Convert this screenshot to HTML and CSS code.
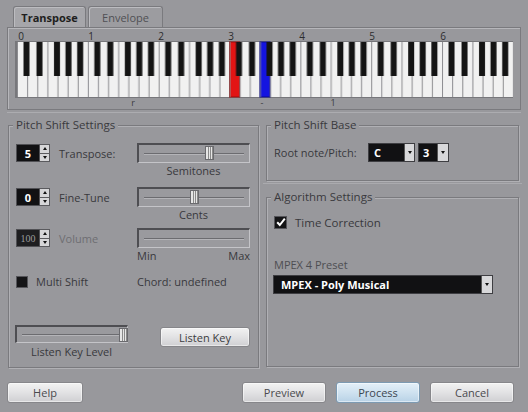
FILE: index.html
```html
<!DOCTYPE html>
<html>
<head>
<meta charset="utf-8">
<link rel="stylesheet" href="styles.css">
</head>
<body>
<div class="dialog">
  <div class="tabs">
    <div class="tab active">Transpose</div>
    <div class="tab inactive">Envelope</div>
  </div>
  <div class="kbpane">
    <svg class="keyboard" width="498" height="80" viewBox="0 0 498 80">
      <defs>
        <pattern id="octave" x="2" y="0" width="70.84" height="80" patternUnits="userSpaceOnUse">
          <rect x="0" y="13" width="1" height="55" fill="#8c8c90"/>
          <rect x="10.12" y="13" width="1" height="55" fill="#8c8c90"/>
          <rect x="20.24" y="13" width="1" height="55" fill="#8c8c90"/>
          <rect x="30.36" y="13" width="1" height="55" fill="#8c8c90"/>
          <rect x="40.48" y="13" width="1" height="55" fill="#8c8c90"/>
          <rect x="50.6" y="13" width="1" height="55" fill="#8c8c90"/>
          <rect x="60.72" y="13" width="1" height="55" fill="#8c8c90"/>
          <rect x="6.5" y="13" width="6" height="34" fill="#141414"/>
          <rect x="19.5" y="13" width="6" height="34" fill="#141414"/>
          <rect x="37" y="13" width="6" height="34" fill="#141414"/>
          <rect x="48.5" y="13" width="6" height="34" fill="#141414"/>
          <rect x="60.2" y="13" width="6" height="34" fill="#141414"/>
        </pattern>
      </defs>
      <g class="oct-labels">
        <text x="6" y="11">0</text>
        <text x="76" y="11">1</text>
        <text x="146" y="11">2</text>
        <text x="216" y="11">3</text>
        <text x="287" y="11">4</text>
        <text x="357" y="11">5</text>
        <text x="428" y="11">6</text>
      </g>
      <rect x="0" y="12" width="498" height="57" fill="#77777b"/>
      <rect x="2" y="13" width="496" height="55" fill="#f1f1f1"/>
      <rect x="214.5" y="13" width="10.1" height="55" fill="#e21414" stroke="#9a0c0c" stroke-width="1"/>
      <rect x="244.9" y="13" width="10.1" height="55" fill="#1414e0" stroke="#0a0a8a" stroke-width="1"/>
      <rect x="2" y="13" width="496" height="55" fill="url(#octave)"/>
      <g class="marks">
        <text x="118" y="77">r</text>
        <text x="247" y="77">-</text>
        <text x="318" y="77">1</text>
      </g>
    </svg>
  </div>

  <div class="lower">
    <fieldset class="group pss">
      <legend>Pitch Shift Settings</legend>

      <div class="prow r1">
        <div class="ctl">
          <div class="spin"><span class="val">5</span><span class="arrows"><i class="up"></i><i class="dn"></i></span></div>
          <span class="lbl">Transpose:</span>
        </div>
        <div class="slider"><i class="groove"></i><b class="thumb" style="left:66px"></b></div>
        <div></div>
        <div class="cap">Semitones</div>
      </div>

      <div class="prow r2">
        <div class="ctl">
          <div class="spin"><span class="val">0</span><span class="arrows"><i class="up"></i><i class="dn"></i></span></div>
          <span class="lbl">Fine-Tune</span>
        </div>
        <div class="slider"><i class="groove"></i><b class="thumb" style="left:51px"></b></div>
        <div></div>
        <div class="cap">Cents</div>
      </div>

      <div class="prow r3">
        <div class="ctl">
          <div class="spin disabled"><span class="val">100</span><span class="arrows"><i class="up"></i><i class="dn"></i></span></div>
          <span class="lbl dim">Volume</span>
        </div>
        <div class="slider"><i class="groove"></i></div>
        <div></div>
        <div class="cap minmax"><span>Min</span><span>Max</span></div>
      </div>

      <div class="prow r4">
        <div class="ctl">
          <span class="check"></span>
          <span class="lbl">Multi Shift</span>
        </div>
        <div class="chord">Chord: undefined</div>
      </div>

      <div class="r5">
        <div class="lkl">
          <div class="slider small"><i class="groove"></i><b class="thumb" style="left:102px"></b></div>
          <div class="cap">Listen Key Level</div>
        </div>
        <button class="btn listen">Listen Key</button>
      </div>
    </fieldset>

    <div class="rightcol">
      <fieldset class="group psb">
        <legend>Pitch Shift Base</legend>
        <div class="rootrow">
          <span class="lbl">Root note/Pitch:</span>
          <div class="drop note"><span class="dval">C</span><span class="darr"><i></i></span></div>
          <div class="drop oct"><span class="dval">3</span><span class="darr"><i></i></span></div>
        </div>
      </fieldset>
      <div class="sep"></div>
      <fieldset class="group algo">
        <legend>Algorithm Settings</legend>
        <div class="checkrow">
          <span class="check on"><svg width="10" height="10" viewBox="0 0 10 10"><path d="M1.2 5.2 L3.8 8 L8.8 1.6" fill="none" stroke="#ffffff" stroke-width="2"/></svg></span>
          <span class="lbl">Time Correction</span>
        </div>
        <div class="preset-lbl">MPEX 4 Preset</div>
        <div class="drop preset"><span class="dval">MPEX - Poly Musical</span><span class="darr"><i></i></span></div>
      </fieldset>
    </div>
  </div>

  <div class="footer">
    <button class="btn help">Help</button>
    <div class="fill"></div>
    <button class="btn">Preview</button>
    <button class="btn process">Process</button>
    <button class="btn">Cancel</button>
  </div>
</div>
</body>
</html>
```

FILE: styles.css
```css
* { box-sizing: border-box; }
html, body { margin: 0; padding: 0; }
body {
  width: 528px;
  height: 412px;
  overflow: hidden;
  background: #98989c;
  font-family: "Open Sans", "Noto Sans", sans-serif;
  font-size: 11px;
  color: #38383c;
}
.dialog { padding: 6px 7px 0 7px; }

/* tabs */
.tabs { display: flex; gap: 2px; margin-left: 6px; height: 21px; align-items: flex-end; }
.tab {
  height: 21px;
  display: flex; align-items: center; justify-content: center;
  border: 1px solid #7a7a7e; border-bottom: none;
  border-radius: 3px 3px 0 0;
  font-size: 11px;
  box-shadow: inset 1px 1px 0 #bcbcc0;
}
.tab.active { width: 73px; background: #a6a6aa; color: #1e1e20; font-weight: bold; }
.tab.inactive { width: 75px; background: #9c9ca0; color: #505054; }

/* keyboard pane */
.kbpane {
  height: 83px;
  border: 1px solid #7a7a7e;
  box-shadow: inset 1px 1px 0 #b6b6ba;
  padding: 1px 0 0 7px;
}
.keyboard { display: block; }
.oct-labels text { font-family: "Open Sans", sans-serif; font-size: 10px; fill: #2c2c2e; text-anchor: middle; }
.marks text { font-family: "Open Sans", sans-serif; font-size: 9px; fill: #3c3c3e; text-anchor: middle; }

/* lower groups */
.lower {
  display: flex;
  margin-top: 2px;
  border-top: 1px solid #acacb0;
  padding-top: 5px;
}
.group {
  margin: 0;
  border: 1px solid #7a7a7e;
  box-shadow: inset 1px 1px 0 #b0b0b4, 1px 1px 0 #b0b0b4;
  min-width: 0;
}
.group legend {
  padding: 0 3px;
  margin-left: -3px;
  line-height: 14px;
  height: 14px;
  font-size: 11.5px;
  color: #3a3a3e;
  background: #98989c;
}
.pss { width: 251px; height: 250px; margin-left: 1px; padding: 11px 0 0 7px; }

.prow { display: grid; grid-template-columns: 121px 113px; }
.r1 { height: 33px; }
.r2 { height: 33px; margin-top: 11px; }
.r3 { height: 34px; margin-top: 8px; }
.r4 { height: 14px; margin-top: 12px; align-items: center; }
.ctl { display: flex; align-items: center; height: 20px; }
.r4 .ctl { height: 14px; }
.lbl { font-size: 11px; color: #38383c; white-space: nowrap; }
.lbl.dim { color: #6e6e72; }
.spin { display: flex; height: 18px; margin-right: 9px; }
.spin .val {
  width: 24px; height: 18px;
  background: #111113;
  border: 1px solid #505054;
  color: #ffffff; font-weight: bold; font-size: 11px;
  display: flex; align-items: center; justify-content: center;
}
.spin.disabled .val {
  background: #1e1e20;
  color: #9c9c9c; font-weight: normal;
  font-family: "Liberation Serif", serif; font-size: 10px;
}
.arrows { display: flex; flex-direction: column; width: 10px; height: 18px; border: 1px solid #5a5a5e; border-left: none; }
.arrows i { flex: 1; background: #d6d6d8; display: flex; align-items: center; justify-content: center; }
.arrows i + i { border-top: 1px solid #5a5a5e; }
.arrows i::after { content: ""; width: 0; height: 0; border-left: 2.5px solid transparent; border-right: 2.5px solid transparent; }
.arrows .up::after { border-bottom: 3px solid #111; }
.arrows .dn::after { border-top: 3px solid #111; }

.slider {
  position: relative;
  height: 20px;
  border-top: 2px solid #4e4e52;
  border-left: 2px solid #4e4e52;
  border-bottom: 1px solid #c4c4c8;
  border-right: 1px solid #c4c4c8;
  background: #9a9a9e;
  display: flex; align-items: center; padding: 0 5px;
}
.slider.small { width: 113px; height: 18px; }
.groove { display: block; flex: 1; height: 2px; border-top: 1px solid #6c6c70; border-bottom: 1px solid #b4b4b8; }
.thumb {
  position: absolute; top: 1px;
  width: 9px; height: 14px;
  background: linear-gradient(90deg, #e6e6e6 0 2px, #8a8a8a 2px 3px, #e6e6e6 3px 4px, #8a8a8a 4px 5px, #e6e6e6 5px 6px, #8a8a8a 6px 7px, #e6e6e6 7px);
  border: 1px solid #6a6a6e;
}
.cap { text-align: center; font-size: 11px; color: #38383c; line-height: 12px; margin-top: 2px; }
.minmax { display: flex; justify-content: space-between; margin-top: 1px; }
.check { width: 12px; height: 12px; background: #141416; border: 1px solid #55555a; margin-right: 8px; display: inline-flex; align-items: center; justify-content: center; }
.chord { font-size: 11px; color: #38383c; }

.r5 { display: flex; margin-top: 37px; margin-left: -1px; align-items: flex-start; }
.lkl { width: 113px; }
.lkl .cap { margin-top: 3px; }
.btn {
  font-family: "Open Sans", "Noto Sans", sans-serif;
  font-size: 11px;
  color: #4a4a4e;
  height: 21px;
  padding: 0;
  border: 1px solid #86868a;
  border-radius: 3px;
  background: linear-gradient(#f2f2f2, #e2e2e4 50%, #cfcfd2);
  box-shadow: inset 0 0 0 1px rgba(255,255,255,0.5);
}
.listen { width: 90px; height: 20px; margin-left: 32px; margin-top: 2px; color: #3c3c40; }

/* right column */
.rightcol { margin-left: 7px; width: 253px; display: flex; flex-direction: column; }
.psb { height: 63px; padding: 11px 0 0 7px; }
.sep { height: 1px; background: #aaaaae; margin: 2px -3px 0 -3px; }
.algo { height: 177px; margin-top: 6px; padding: 11px 0 0 7px; }
.rootrow { display: flex; align-items: center; height: 19px; }
.rootrow .lbl { width: 94px; }
.drop { display: flex; height: 19px; border: 1px solid #3e3e42; }
.dval { background: #111113; color: #fff; font-weight: bold; font-size: 11px; display: flex; align-items: center; padding-left: 5px; }
.darr { background: #d8d8da; display: flex; align-items: center; justify-content: center; border-left: 1px solid #555; }
.darr i { width: 0; height: 0; border-left: 2.5px solid transparent; border-right: 2.5px solid transparent; border-top: 3px solid #111; }
.note .dval { width: 35px; }
.note .darr { width: 10px; }
.oct { margin-left: 3px; }
.oct .dval { width: 18px; padding-left: 4px; }
.oct .darr { width: 11px; }
.checkrow { display: flex; align-items: center; height: 14px; }
.check.on { width: 13px; height: 13px; }
.checkrow .lbl { font-size: 11.5px; }
.preset-lbl { margin-top: 29px; font-size: 11px; color: #4e4e52; line-height: 14px; }
.drop.preset { width: 220px; margin-left: -1px; margin-top: 3px; height: 19px; }
.preset .dval { flex: 1; padding-left: 7px; }
.preset .darr { width: 11px; }

/* footer */
.footer { display: flex; gap: 10px; margin-top: 14px; margin-right: 7px; }
.help { width: 76px; }
.fill { flex: 1; }
.footer .btn:not(.help) { width: 84px; }
.process {
  background: linear-gradient(#e4f0f8, #cfe2f0 50%, #b8d2e6);
  border-color: #7c9ab2;
  color: #3c4650;
}
```
